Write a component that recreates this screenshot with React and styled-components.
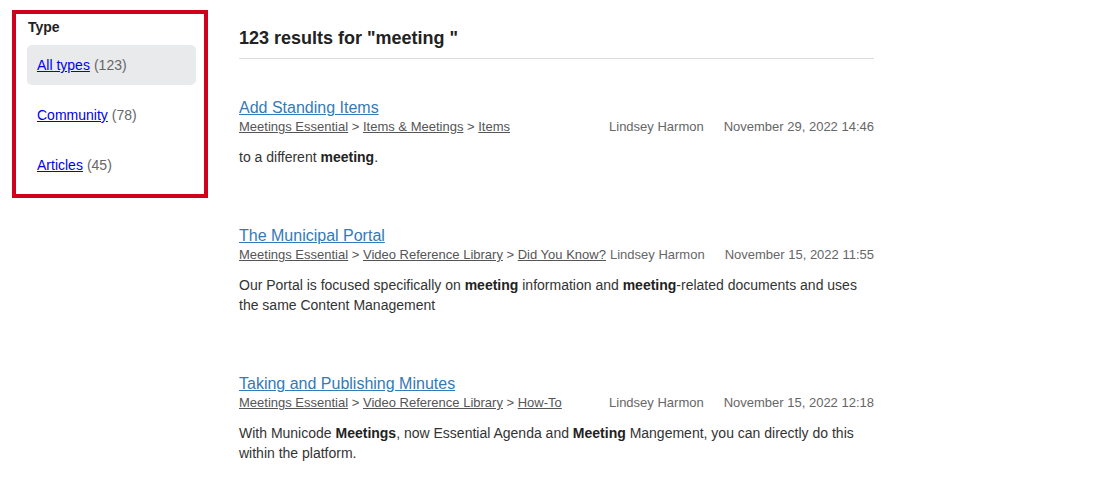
import React from 'react'
import styled, { createGlobalStyle } from 'styled-components'

const results = [
  {
    title: 'Add Standing Items',
    crumbs: ['Meetings Essential', 'Items & Meetings', 'Items'],
    author: 'Lindsey Harmon',
    date: 'November 29, 2022 14:46',
    snippet: <>to a different <b>meeting</b>.</>,
  },
  {
    title: 'The Municipal Portal',
    crumbs: ['Meetings Essential', 'Video Reference Library', 'Did You Know?'],
    author: 'Lindsey Harmon',
    date: 'November 15, 2022 11:55',
    snippet: (
      <>
        Our Portal is focused specifically on <b>meeting</b> information and <b>meeting</b>-related
        documents and uses the same Content Management
      </>
    ),
  },
  {
    title: 'Taking and Publishing Minutes',
    crumbs: ['Meetings Essential', 'Video Reference Library', 'How-To'],
    author: 'Lindsey Harmon',
    date: 'November 15, 2022 12:18',
    snippet: (
      <>
        With Municode <b>Meetings</b>, now Essential Agenda and <b>Meeting</b> Mangement, you can
        directly do this within the platform.
      </>
    ),
  },
]

const types = [
  { label: 'All types', count: 123, active: true },
  { label: 'Community', count: 78 },
  { label: 'Articles', count: 45 },
]

/*---> Component <---*/
export default function App() {
  return (
    <>
      <GlobalStyle />
      <Page>
        <Sidebar>
          <FilterTitle>Type</FilterTitle>
          {types.map((t) => (
            <FilterItem key={t.label} $active={t.active}>
              <FilterLink href='#'>{t.label}</FilterLink>
              <Count>({t.count})</Count>
            </FilterItem>
          ))}
        </Sidebar>
        <Main>
          <Heading>123 results for "meeting "</Heading>
          <ResultList>
            {results.map((r) => (
              <Result key={r.title}>
                <ResultTitle href='#'>{r.title}</ResultTitle>
                <MetaRow>
                  <Crumbs>
                    {r.crumbs.map((c, i) => (
                      <React.Fragment key={c}>
                        {i > 0 && ' > '}
                        <CrumbLink href='#'>{c}</CrumbLink>
                      </React.Fragment>
                    ))}
                  </Crumbs>
                  <Info>
                    <span>{r.author}</span>
                    <span>{r.date}</span>
                  </Info>
                </MetaRow>
                <Snippet>{r.snippet}</Snippet>
              </Result>
            ))}
          </ResultList>
        </Main>
      </Page>
    </>
  )
}

/*---> Styles <---*/
const GlobalStyle = createGlobalStyle`
  body {
    margin: 0;
    background: #fff;
    font-family: "Liberation Sans", Arial, sans-serif;
    color: #333;
  }
`

const Page = styled.div`
  display: flex;
  align-items: flex-start;
  gap: 31px;
  padding: 10px 12px;
`

const Sidebar = styled.div`
  width: 169px;
  border: 4px solid #d0021b;
  padding: 3px 8px 9px 11px;
  box-sizing: content-box;
  display: flex;
  flex-direction: column;
  gap: 10px;
`

const FilterTitle = styled.div`
  font-size: 14px;
  font-weight: 700;
  line-height: 20px;
  color: #222;
  margin-bottom: -2px;
  margin-left: 1px;
`

const FilterItem = styled.div`
  height: 40px;
  display: flex;
  align-items: center;
  gap: 4px;
  padding: 0 10px;
  box-sizing: border-box;
  border-radius: 5px;
  background: ${(p) => (p.$active ? '#e9eaec' : 'transparent')};
  font-size: 14px;
`

const FilterLink = styled.a`
  color: #0000ee;
  text-decoration: underline;
`

const Count = styled.span`
  color: #666;
`

const Main = styled.div`
  width: 635px;
`

const Heading = styled.h2`
  margin: 16px 0 0;
  padding-bottom: 8px;
  border-bottom: 1px solid #ddd;
  font-size: 18px;
  line-height: 24px;
  font-weight: 700;
  color: #222;
`

const ResultList = styled.div`
  display: flex;
  flex-direction: column;
  gap: 59px;
  padding-top: 39px;
`

const Result = styled.div`
  display: flex;
  flex-direction: column;
`

const ResultTitle = styled.a`
  font-size: 16px;
  line-height: 20px;
  color: #337ab7;
  text-decoration: underline;
  align-self: flex-start;
`

const MetaRow = styled.div`
  display: flex;
  justify-content: space-between;
  font-size: 13px;
  line-height: 18px;
  color: #555;
`

const Crumbs = styled.div`
  white-space: pre;
`

const CrumbLink = styled.a`
  color: #555;
  text-decoration: underline;
`

const Info = styled.div`
  display: flex;
  gap: 20px;
  color: #666;
  white-space: nowrap;
  padding-left: 4px;
`

const Snippet = styled.p`
  margin: 11px 0 0;
  font-size: 14px;
  line-height: 20px;
  color: #333;

  b {
    color: #222;
  }
`
